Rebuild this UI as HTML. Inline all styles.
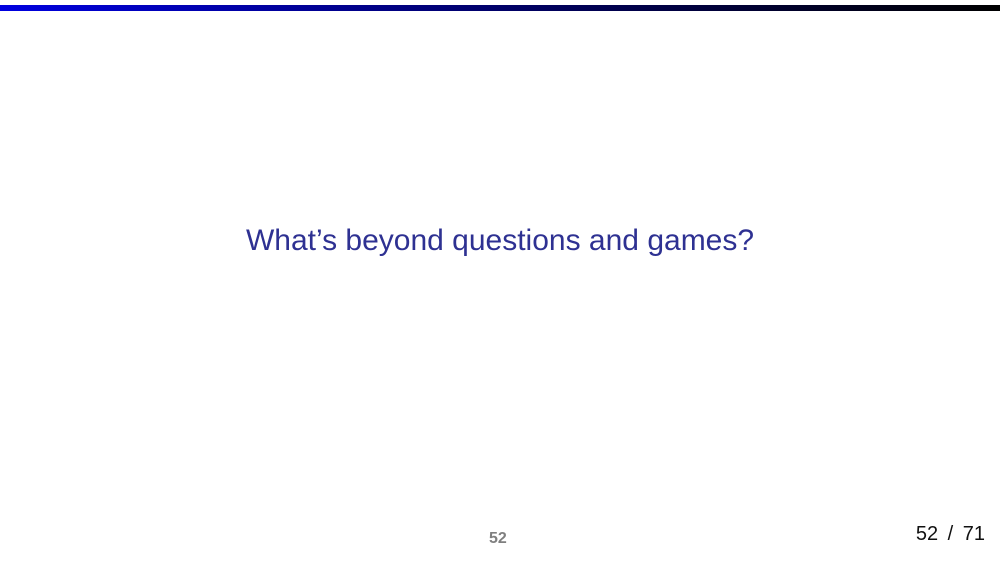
<!DOCTYPE html>
<html><head><meta charset="utf-8"><style>
html,body{margin:0;padding:0;background:#fff;width:1000px;height:563px;overflow:hidden;position:relative;font-family:"Liberation Sans",sans-serif}
.bar{position:absolute;left:0;top:5px;width:1000px;height:6px;background:linear-gradient(to right,#0000e0,#000050 60%,#000);}
.t{position:absolute;left:0;width:1000px;top:224px;text-align:center;color:#2e3192;font-size:30px;}
.n{position:absolute;left:489px;top:530px;font-size:16px;font-weight:bold;color:#7f7f7f}
.p{position:absolute;right:15px;top:523px;font-size:20px;color:#111;word-spacing:4px}
</style></head><body>
<div class="bar"></div>
<div class="t">What’s beyond questions and games?</div>
<div class="n">52</div>
<div class="p">52 / 71</div>
</body></html>
